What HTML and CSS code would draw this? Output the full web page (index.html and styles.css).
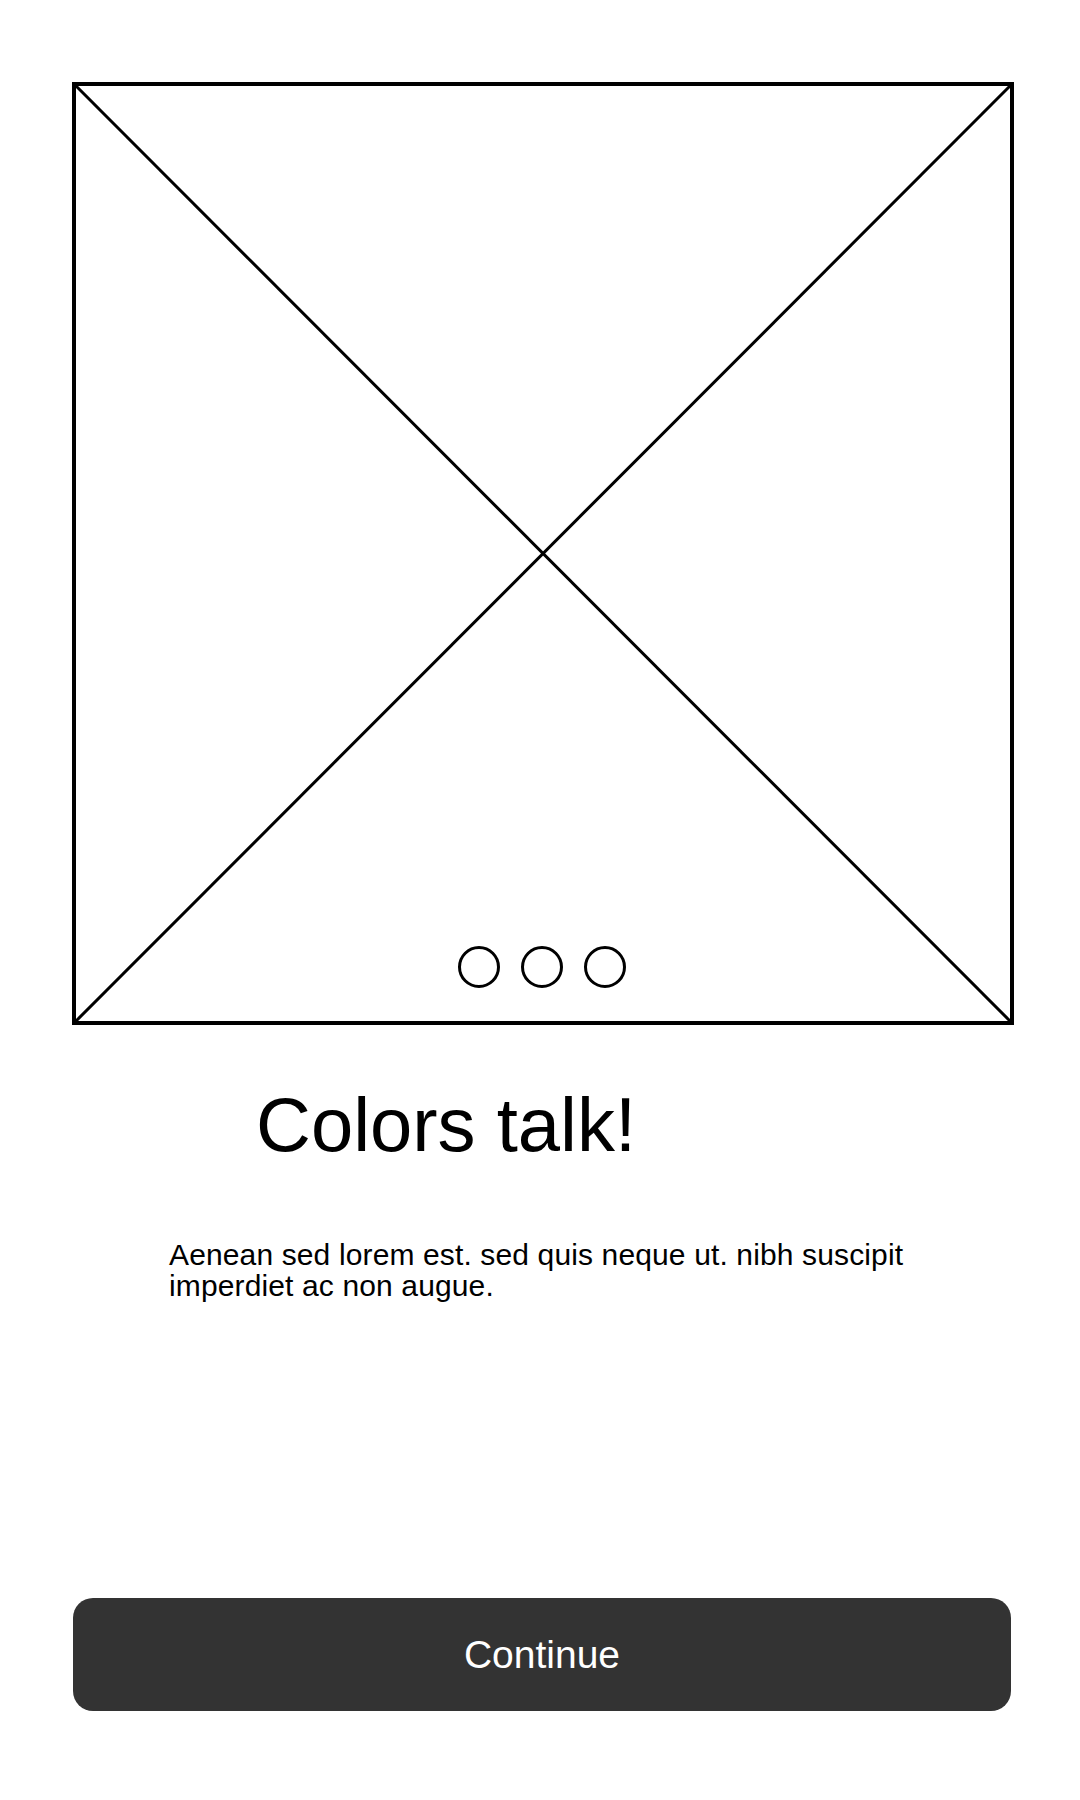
FILE: index.html
```html
<!DOCTYPE html>
<html lang="en">
<head>
<meta charset="utf-8">
<title>Colors talk!</title>
<link rel="stylesheet" href="styles.css">
</head>
<body>
<main class="screen">
  <div class="hero">
    <svg class="hero-x" viewBox="0 0 934 935" preserveAspectRatio="none">
      <line x1="0" y1="0" x2="934" y2="935" />
      <line x1="934" y1="0" x2="0" y2="935" />
    </svg>
    <div class="dots">
      <span class="dot"></span>
      <span class="dot"></span>
      <span class="dot"></span>
    </div>
  </div>
  <h1 class="title">Colors talk!</h1>
  <p class="text">Aenean sed lorem est. sed quis neque ut. nibh suscipit<br>imperdiet ac non augue.</p>
  <button class="cta" type="button">Continue</button>
</main>
</body>
</html>
```

FILE: styles.css
```css
* {
  box-sizing: border-box;
}

html, body {
  margin: 0;
  padding: 0;
  background: #ffffff;
}

body {
  font-family: "Liberation Sans", Arial, sans-serif;
  color: #000000;
}

.screen {
  width: 1080px;
  height: 1800px;
  padding: 82px 0 0 72px;
  display: flex;
  flex-direction: column;
  align-items: flex-start;
}

.hero {
  position: relative;
  width: 942px;
  height: 943px;
  border: 4px solid #000000;
  flex: none;
}

.hero-x {
  display: block;
  width: 100%;
  height: 100%;
}

.hero-x line {
  stroke: #000000;
  stroke-width: 3;
}

.dots {
  position: absolute;
  left: 0;
  right: 2px;
  bottom: 33px;
  display: flex;
  justify-content: center;
  gap: 21px;
}

.dot {
  width: 42px;
  height: 42px;
  border: 3px solid #000000;
  border-radius: 50%;
  background: #ffffff;
}

.title {
  margin: 56px 0 0 184px;
  font-size: 76px;
  line-height: 88px;
  font-weight: 400;
}

.text {
  margin: 70px 0 0 97px;
  font-size: 30px;
  line-height: 31px;
  letter-spacing: 0.13px;
}

.cta {
  margin: 297px 0 0 1px;
  width: 938px;
  height: 113px;
  border: none;
  border-radius: 20px;
  background: #333333;
  color: #ffffff;
  font-family: "Liberation Sans", Arial, sans-serif;
  font-size: 39px;
  display: flex;
  align-items: center;
  justify-content: center;
  padding: 0;
}
```
